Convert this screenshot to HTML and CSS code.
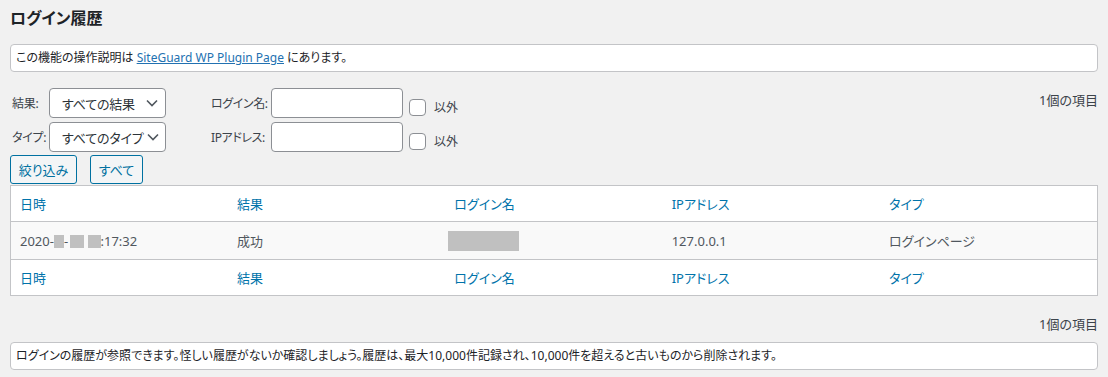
FILE: index.html
```html
<!DOCTYPE html>
<html lang="ja">
<head>
<meta charset="UTF-8">
<meta name="viewport" content="width=device-width, initial-scale=1.0">
<title>ログイン履歴</title>
<link rel="stylesheet" href="styles.css">
</head>
<body>
<div class="wrap">
    <h1>ログイン履歴</h1>
    <div class="notice">この機能の操作説明は <a href="#">SiteGuard WP Plugin Page</a> にあります。</div>

    <div class="tablenav top">
        <div class="filters">
            <div class="filter-row">
                <span class="label-a">結果:</span>
                <div class="select"><span>すべての結果</span>
                    <svg width="12" height="8" viewBox="0 0 12 8"><path d="M1 1.5l5 5 5-5" fill="none" stroke="#50575e" stroke-width="1.6"/></svg>
                </div>
                <span class="label-b">ログイン名:</span>
                <div class="text-input"></div>
                <span class="checkbox"></span>
                <span class="except">以外</span>
            </div>
            <div class="filter-row">
                <span class="label-a">タイプ:</span>
                <div class="select"><span>すべてのタイプ</span>
                    <svg width="12" height="8" viewBox="0 0 12 8"><path d="M1 1.5l5 5 5-5" fill="none" stroke="#50575e" stroke-width="1.6"/></svg>
                </div>
                <span class="label-b">IPアドレス:</span>
                <div class="text-input"></div>
                <span class="checkbox"></span>
                <span class="except">以外</span>
            </div>
            <div class="buttons">
                <button class="button narrow-a">絞り込み</button>
                <button class="button narrow-b">すべて</button>
            </div>
        </div>
        <div class="count">1個の項目</div>
    </div>

    <table class="list">
        <thead>
            <tr><th>日時</th><th>結果</th><th>ログイン名</th><th>IPアドレス</th><th>タイプ</th></tr>
        </thead>
        <tbody>
            <tr>
                <td class="date">2020-<span class="mask m1"></span>-<span class="mask m2"></span> <span class="mask m3"></span>:17:32</td>
                <td>成功</td>
                <td><span class="mask name"></span></td>
                <td>127.0.0.1</td>
                <td>ログインページ</td>
            </tr>
        </tbody>
        <tfoot>
            <tr><th>日時</th><th>結果</th><th>ログイン名</th><th>IPアドレス</th><th>タイプ</th></tr>
        </tfoot>
    </table>

    <div class="tablenav bottom">
        <div class="count">1個の項目</div>
    </div>
    <div class="notice">ログインの履歴が参照できます。怪しい履歴がないか確認しましょう。履歴は、最大10,000件記録され、10,000件を超えると古いものから削除されます。</div>
</div>
</body>
</html>
```

FILE: styles.css
```css
body {
    margin: 0;
    background: #f1f1f1;
    color: #3c434a;
    font-family: "Noto Sans", "Noto Sans CJK JP", sans-serif;
    font-size: 13px;
    font-feature-settings: "palt";
}
.wrap {
    padding: 0 10px;
}
h1 {
    margin: 0;
    padding-top: 6px;
    height: 44px;
    box-sizing: border-box;
    font-size: 16px;
    font-weight: bold;
    color: #1d2327;
    line-height: 24px;
}
.notice {
    background: #fff;
    border: 1px solid #c3c4c7;
    border-radius: 4px;
    height: 28px;
    box-sizing: border-box;
    line-height: 26px;
    padding: 0 5px;
    color: #1d2327;
    font-size: 12px;
}
.notice a {
    color: #2271b1;
}
.tablenav {
    display: flex;
    justify-content: space-between;
}
.tablenav.top {
    margin-top: 16px;
}
.filter-row {
    display: flex;
    align-items: center;
    height: 30px;
    margin-bottom: 4px;
    white-space: nowrap;
}
.filter-row > * {
    flex-shrink: 0;
}
.label-a {
    width: 37px;
    padding-left: 2px;
    font-size: 12px;
    letter-spacing: -0.3px;
}
.label-b {
    width: 60px;
    margin-left: 45px;
    font-size: 12px;
    letter-spacing: -0.4px;
}
.select {
    width: 117px;
    height: 30px;
    box-sizing: border-box;
    border: 1px solid #8c8f94;
    border-radius: 4px;
    background: #fff;
    display: flex;
    align-items: center;
    justify-content: space-between;
    padding: 0 7px 0 12px;
    font-size: 13px;
    letter-spacing: -0.2px;
    color: #2c3338;
}
.select svg {
    flex-shrink: 0;
    margin-left: 4px;
}
.text-input {
    width: 132px;
    height: 30px;
    box-sizing: border-box;
    border: 1px solid #8c8f94;
    border-radius: 4px;
    background: #fff;
}
.checkbox {
    width: 17px;
    height: 17px;
    box-sizing: border-box;
    border: 1px solid #8c8f94;
    border-radius: 4px;
    background: #fff;
    margin: 8px 0 0 6px;
}
.except {
    margin: 8px 0 0 8px;
    font-size: 12px;
}
.buttons {
    display: flex;
    gap: 13px;
    margin-top: -1px;
}
.button {
    height: 29px;
    padding: 0;
    border: 1px solid #0071a1;
    border-radius: 3px;
    background: #f3f5f6;
    color: #0071a1;
    font: inherit;
    font-size: 13px;
}
.narrow-a { width: 67px; }
.narrow-b { width: 53px; }
.count {
    padding-top: 4px;
    line-height: 16px;
    color: #3c434a;
}
.list {
    width: 100%;
    border-collapse: collapse;
    table-layout: fixed;
    background: #fff;
    border: 1px solid #c3c4c7;
    margin-top: 1px;
}
.list th {
    text-align: left;
    font-weight: normal;
    color: #0073aa;
    font-size: 13px;
    height: 35px;
    padding: 0 9px;
}
.list thead th {
    border-bottom: 1px solid #c3c4c7;
}
.list tfoot th {
    border-top: 1px solid #c3c4c7;
}
.list td {
    background: #f9f9f9;
    height: 37px;
    padding: 0 9px;
    color: #50575e;
}
.mask {
    display: inline-block;
    background: #c0c0c0;
    height: 13px;
    vertical-align: -2px;
}
.m1 { width: 10px; }
.m2 { width: 14px; margin-left: 2px; }
.m3 { width: 13px; }
.mask.name {
    width: 71px;
    height: 20px;
    vertical-align: middle;
    margin-left: -6px;
}
.tablenav.bottom {
    justify-content: flex-end;
    height: 46px;
    padding-top: 16px;
    box-sizing: border-box;
}
```
